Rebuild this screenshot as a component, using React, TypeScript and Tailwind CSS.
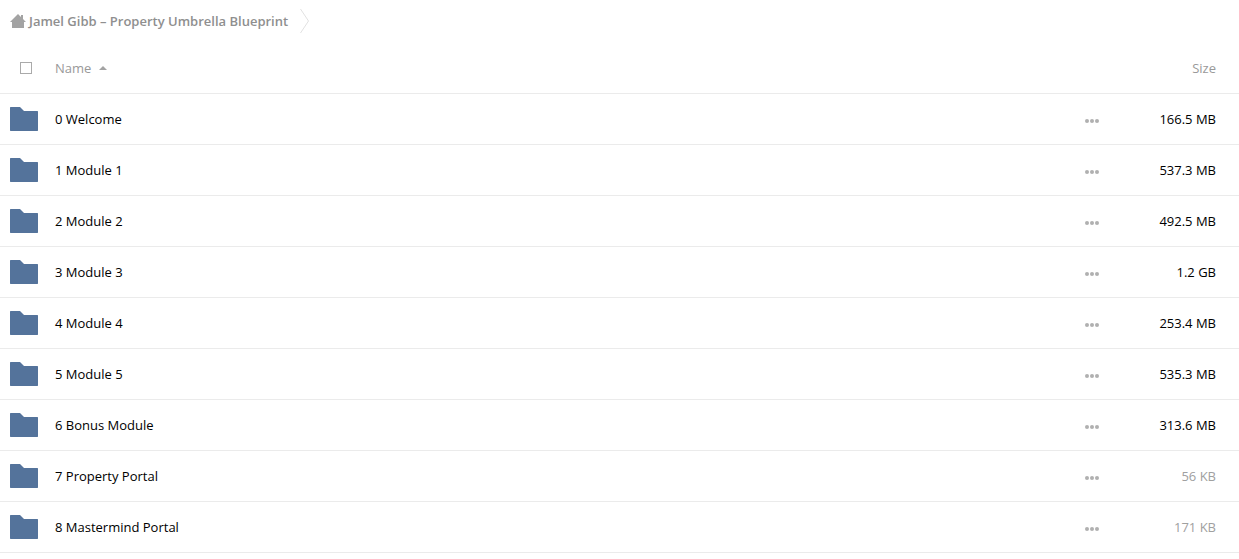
type FileEntry = {
  name: string;
  size: string;
  muted?: boolean;
};

const files: FileEntry[] = [
  { name: '0 Welcome', size: '166.5 MB' },
  { name: '1 Module 1', size: '537.3 MB' },
  { name: '2 Module 2', size: '492.5 MB' },
  { name: '3 Module 3', size: '1.2 GB' },
  { name: '4 Module 4', size: '253.4 MB' },
  { name: '5 Module 5', size: '535.3 MB' },
  { name: '6 Bonus Module', size: '313.6 MB' },
  { name: '7 Property Portal', size: '56 KB', muted: true },
  { name: '8 Mastermind Portal', size: '171 KB', muted: true },
];

function HomeIcon() {
  return (
    <svg width="16" height="14" viewBox="0 0 16 14" fill="#a3a3a3" aria-hidden="true">
      <path d="M8 0 L11 3 V1 H13 V5 L16 8 H14 V14 H2 V8 H0 Z" />
    </svg>
  );
}

function FolderIcon() {
  return (
    <svg width="28" height="24" viewBox="0 0 28 24" fill="#54739b" aria-hidden="true">
      <path d="M0.5 0 H10 L14 4 H27.5 L28 4.5 V23.5 L27.5 24 H0.5 L0 23.5 V0.5 Z" />
    </svg>
  );
}

function MoreIcon() {
  return (
    <svg width="14" height="4" viewBox="0 0 14 4" fill="#b0b0b0" aria-hidden="true">
      <circle cx="2" cy="2" r="2" />
      <circle cx="7" cy="2" r="2" />
      <circle cx="12" cy="2" r="2" />
    </svg>
  );
}

function Breadcrumb() {
  return (
    <nav className="flex h-[42px] items-center pl-[10px]">
      <a href="#" className="flex items-center gap-[3px] font-semibold text-[#8f8f8f]">
        <HomeIcon />
        <span>Jamel Gibb – Property Umbrella Blueprint</span>
      </a>
      <svg className="ml-3" width="9" height="26" viewBox="0 0 9 26" fill="none" stroke="#e2e2e2" aria-hidden="true">
        <path d="M0.5 1 L8.5 13 L0.5 25" />
      </svg>
    </nav>
  );
}

function FileRow({ file }: { file: FileEntry }) {
  return (
    <tr className="h-[51px]">
      <td className="border-b border-[#ebebeb] pl-[10px]">
        <FolderIcon />
      </td>
      <td className="border-b border-[#ebebeb]">
        <a href="#" className="text-black">{file.name}</a>
      </td>
      <td className="border-b border-[#ebebeb]">
        <button type="button" aria-label={`Actions for ${file.name}`} className="flex pt-1">
          <MoreIcon />
        </button>
      </td>
      <td className={`border-b border-[#ebebeb] pr-[23px] text-right ${file.muted ? 'text-[#a0a0a0]' : 'text-black'}`}>
        {file.size}
      </td>
    </tr>
  );
}

export default function App() {
  return (
    <div className="min-h-screen bg-white font-['Open_Sans',sans-serif] text-[13px] leading-5">
      <Breadcrumb />
      <table className="w-full table-fixed border-separate border-spacing-0">
        <colgroup>
          <col className="w-[55px]" />
          <col />
          <col className="w-[54px]" />
          <col className="w-[100px]" />
        </colgroup>
        <thead>
          <tr className="h-[52px] text-[#999999]">
            <th className="border-b border-[#ebebeb] pl-5">
              <input
                type="checkbox"
                aria-label="Select all"
                className="block size-3 appearance-none border border-[#aaaaaa] bg-white checked:bg-[#54739b]"
              />
            </th>
            <th className="border-b border-[#ebebeb] text-left font-normal">
              <button type="button" className="flex items-center gap-2">
                Name
                <svg width="8" height="4" viewBox="0 0 8 4" fill="#a3a3a3" aria-hidden="true">
                  <path d="M0 4 L4 0 L8 4 Z" />
                </svg>
              </button>
            </th>
            <td className="border-b border-[#ebebeb]" />
            <th className="border-b border-[#ebebeb] pr-[23px] text-right font-normal">
              <button type="button">Size</button>
            </th>
          </tr>
        </thead>
        <tbody>
          {files.map((file) => (
            <FileRow key={file.name} file={file} />
          ))}
        </tbody>
      </table>
    </div>
  );
}
